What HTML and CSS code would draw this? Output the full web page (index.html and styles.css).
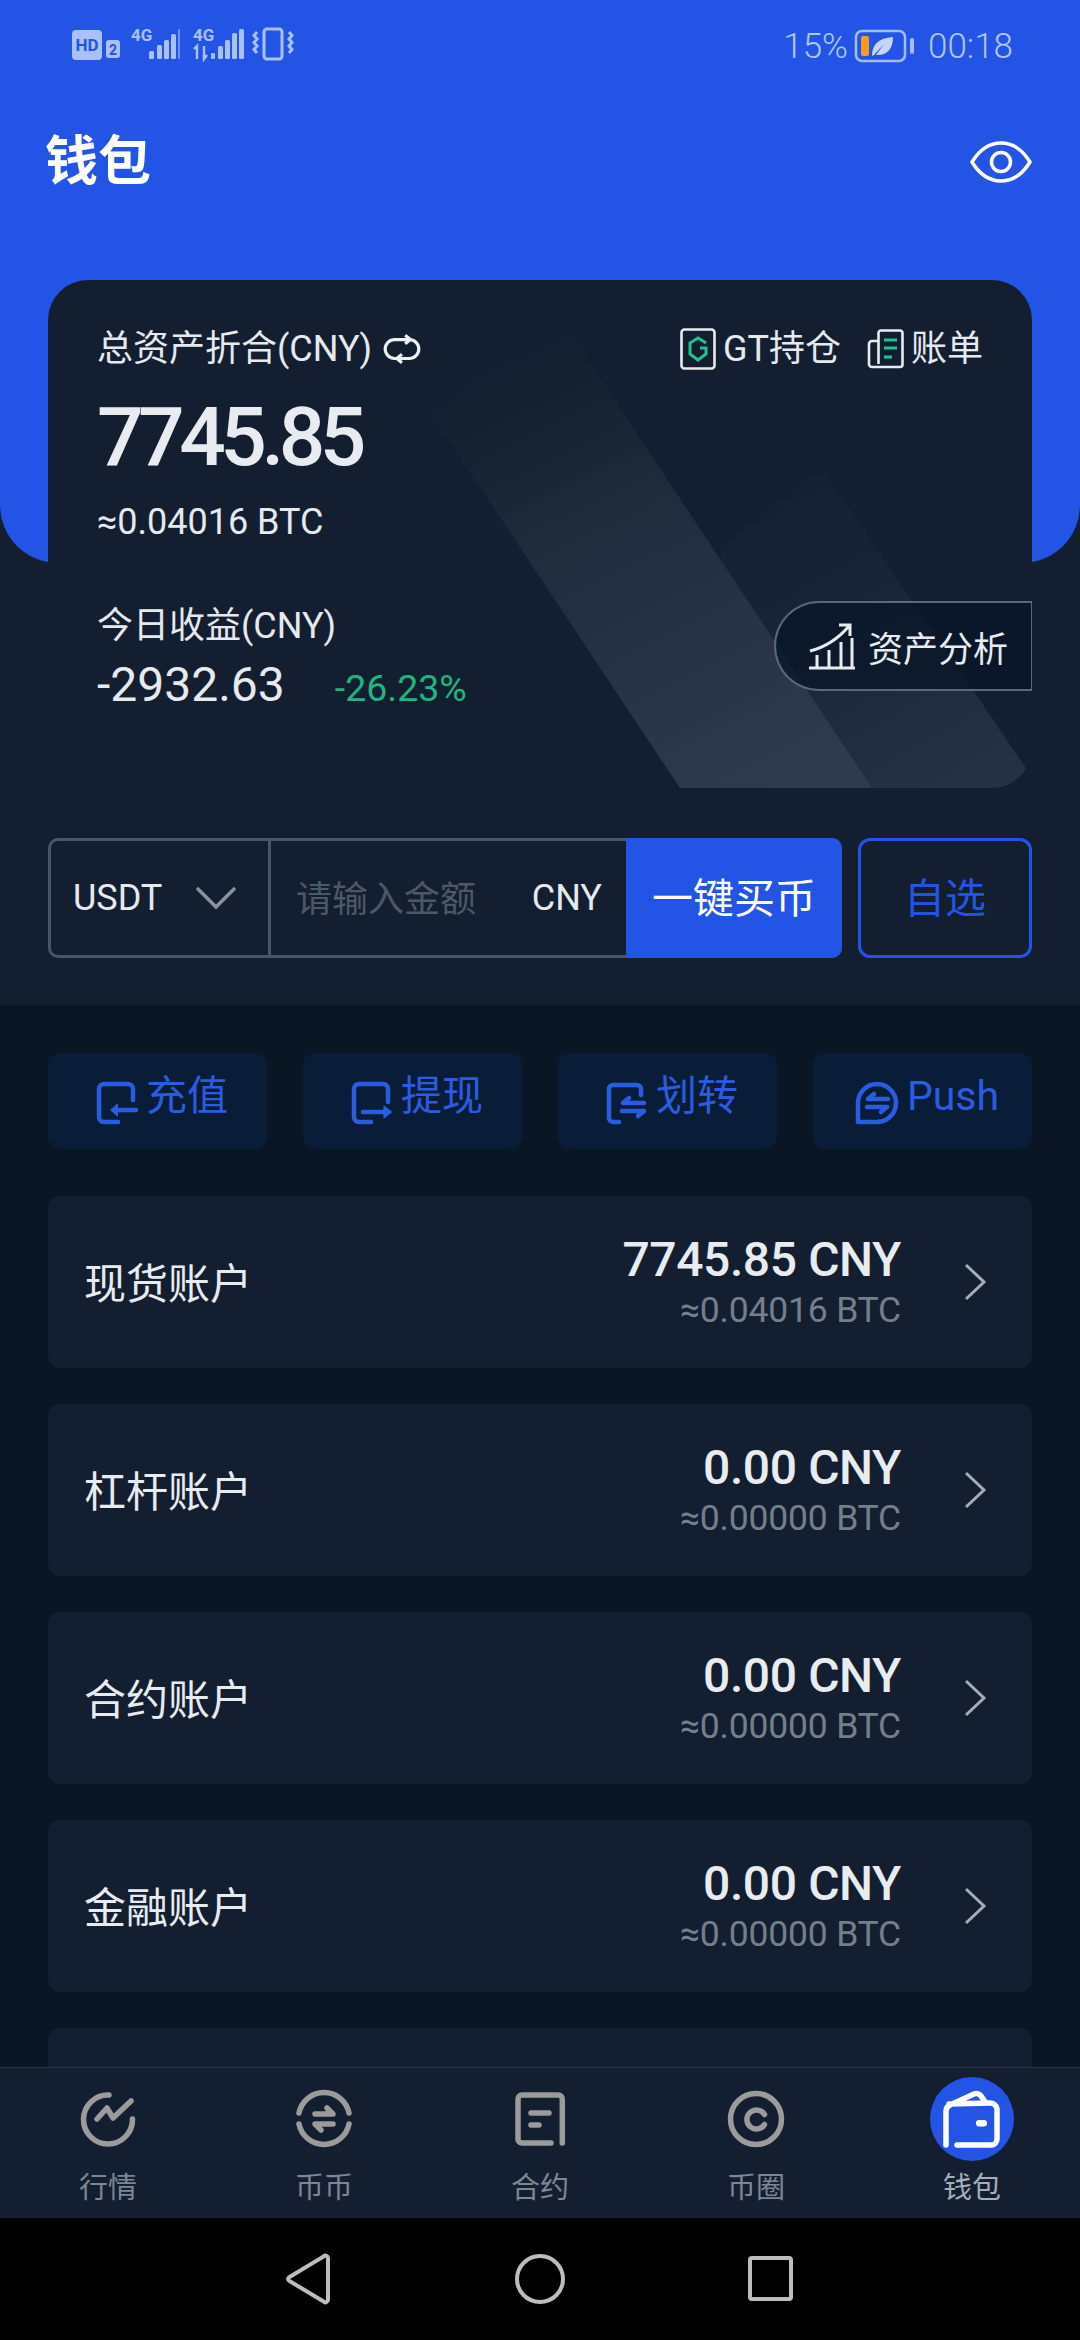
FILE: index.html
```html
<!DOCTYPE html>
<html lang="zh">
<head>
<meta charset="utf-8">
<title>钱包</title>
<link rel="stylesheet" href="styles.css">
</head>
<body>
<div class="app">
  <section class="top">
    <div class="hero"></div>
    <div class="status">
      <svg class="status-left" width="230" height="36" viewBox="0 0 230 36">
        <rect x="2" y="4" width="30" height="30" rx="4" fill="#a9c0f8"/>
        <text x="17" y="25" class="hd">HD</text>
        <rect x="36" y="14" width="14" height="18" rx="3" fill="#a9c0f8"/>
        <text x="43" y="29" class="hd2">2</text>
        <text x="61" y="15" class="g4">4G</text>
        <g fill="#a9c0f8"><rect x="79" y="25" width="5" height="8" rx="1.500"/><rect x="87" y="19" width="5" height="14" rx="1.500"/><rect x="94" y="14" width="5" height="19" rx="1.500"/><rect x="101" y="8" width="5" height="25" rx="1.500"/></g>
        <rect x="108" y="3" width="2" height="30" fill="#6f93ee"/>
        <text x="123" y="15" class="g4">4G</text>
        <path d="M127 33V20l-3 3M134 20v13l3-4" stroke="#a9c0f8" stroke-width="2.400" fill="none"/>
        <g fill="#a9c0f8"><rect x="141" y="27" width="4" height="6" rx="1"/><rect x="148" y="20" width="5" height="13" rx="1.500"/><rect x="155" y="14" width="5" height="19" rx="1.500"/><rect x="162" y="7" width="5" height="26" rx="1.500"/><rect x="169" y="3" width="5" height="30" rx="1.500"/></g>
        <rect x="194" y="3" width="18" height="30" rx="3" fill="none" stroke="#a9c0f8" stroke-width="3"/>
        <path d="M187 6l-3 3.500 3 3.500-3 3.500 3 3.500-3 3.500 3 3.500M219 6l3 3.500-3 3.500 3 3.500-3 3.500 3 3.500-3 3.500" fill="none" stroke="#a9c0f8" stroke-width="3"/>
      </svg>
      <div class="status-right">
        <span class="pct">15%</span>
        <svg width="62" height="34" viewBox="0 0 62 34">
          <rect x="2" y="2" width="49" height="30" rx="6" fill="none" stroke="#a3bcf6" stroke-width="2.5"/>
          <rect x="7" y="7" width="8" height="20" rx="2" fill="#f79a1f"/>
          <path d="M18 27c0-11 6-18 21-19 0 12-6 19-17 18l8-11-10 11z" fill="#c6d5fa"/>
          <rect x="56" y="9" width="4" height="16" rx="2" fill="#a3bcf6"/>
        </svg>
        <span class="time">00:18</span>
      </div>
    </div>
    <div class="title-row">
      <h1 class="title">钱包</h1>
      <svg width="62" height="44" viewBox="0 0 62 44"><path d="M2 22C10 9 20 3 31 3s21 6 29 19c-8 13-18 19-29 19S10 35 2 22z" fill="none" stroke="#fff" stroke-width="3.5"/><circle cx="31" cy="22" r="9.5" fill="none" stroke="#fff" stroke-width="3.5"/></svg>
    </div>

    <div class="card">
      <svg class="bands" width="984" height="508" viewBox="0 0 984 508">
        <defs>
          <linearGradient id="b1" gradientUnits="userSpaceOnUse" x1="500" y1="50" x2="720" y2="508"><stop offset="0" stop-color="#18232f" stop-opacity="0"/><stop offset=".35" stop-color="#1f2b3b"/><stop offset="1" stop-color="#2f3b4c"/></linearGradient>
          <linearGradient id="b2" gradientUnits="userSpaceOnUse" x1="730" y1="200" x2="900" y2="500"><stop offset="0" stop-color="#1c2839" stop-opacity=".1"/><stop offset=".3" stop-color="#172334"/><stop offset="1" stop-color="#253142"/></linearGradient>
        </defs>
        <path d="M672 267L775 190 984 497 960 508H700z" fill="url(#b2)"/>
        <path d="M384 135L504 26 824 508H632z" fill="url(#b1)"/>
      </svg>
      <div class="card-head">
        <div class="card-label">总资产折合(CNY)
          <svg class="swap" width="42" height="32" viewBox="0 0 40 30"><path d="M14 6H13a9 9 0 0 0 0 18h13M26 6h1a9 9 0 0 1 0 18h-1M14 6h14M23 2l5 4-5 4M20 20l-5 4 5 4" fill="none" stroke="#eef0f3" stroke-width="3"/></svg>
        </div>
        <div class="card-links">
          <span class="link">
            <svg width="36" height="42" viewBox="0 0 36 42"><rect x="1.5" y="1.5" width="33" height="39" rx="3" fill="none" stroke="#e8ebef" stroke-width="2.6"/><path d="M26 15l-8-5-8 5v11l8 6 8-6v-6h-6" fill="none" stroke="#1fc38b" stroke-width="3"/></svg>
            GT持仓
          </span>
          <span class="link">
            <svg width="37" height="40" viewBox="0 0 37 40"><path d="M12 38H5a3 3 0 0 1-3-3V15a3 3 0 0 1 3-3h7M12 38h21a2.500 2.500 0 0 0 2.500-2.500V4A2.500 2.500 0 0 0 33 1.500H14A2.500 2.500 0 0 0 11.500 4v31" fill="none" stroke="#e8ebef" stroke-width="2.600"/><path d="M17 11h13M17 19h13M17 28h8" stroke="#1fc38b" stroke-width="3"/></svg>
            账单
          </span>
        </div>
      </div>
      <div class="amount">7745.85</div>
      <div class="btc">≈0.04016 BTC</div>
      <div class="today">
        <div class="today-info">
          <div class="today-label">今日收益(CNY)</div>
          <div class="today-values"><span class="today-num">-2932.63</span><span class="today-pct">-26.23%</span></div>
        </div>
        <div class="analysis">
          <svg width="48" height="48" viewBox="0 0 48 48"><path d="M1 46h46M9 46V33M21 46V28M33 46V20M44 46V16" stroke="#e8ebef" stroke-width="3" fill="none"/><path d="M2 29C18 25 30 17 41 4M31 3h11v11" stroke="#e8ebef" stroke-width="3" fill="none"/></svg>
          资产分析
        </div>
      </div>
    </div>

    <div class="buy">
      <div class="buy-box">
        <div class="coin">USDT
          <svg width="44" height="26" viewBox="0 0 44 26"><path d="M3 3l19 19L41 3" fill="none" stroke="#8a929c" stroke-width="3.500"/></svg>
        </div>
        <div class="input"><span class="placeholder">请输入金额</span><span class="unit">CNY</span></div>
        <div class="buy-btn"><span class="btn-text">一键买币</span></div>
      </div>
      <div class="fav"><span class="btn-text">自选</span></div>
    </div>
  </section>

  <section class="list">
    <div class="actions">
      <div class="action">
        <svg class="ico" width="42" height="42" viewBox="0 0 42 42"><path d="M22 40H8a5 5 0 0 1-5-5V7a5 5 0 0 1 5-5h24a5 5 0 0 1 5 5v11M40 28H20"/><path class="ico-fill" d="M14 28l8-7v14z"/></svg>
        <span class="action-text">充值</span>
      </div>
      <div class="action">
        <svg class="ico" width="42" height="42" viewBox="0 0 42 42"><path d="M20 40H8a5 5 0 0 1-5-5V7a5 5 0 0 1 5-5h24a5 5 0 0 1 5 5v13M12 30h21"/><path class="ico-fill" d="M41.500 30l-9-7v14z"/></svg>
        <span class="action-text">提现</span>
      </div>
      <div class="action">
        <svg class="ico" width="42" height="42" viewBox="0 0 42 42"><path d="M13 40H7a4 4 0 0 1-4-4V7a4 4 0 0 1 4-4h24a4 4 0 0 1 4 4v6M38 21H17l6-5M16 29h22l-6 5"/></svg>
        <span class="action-text">划转</span>
      </div>
      <div class="action">
        <svg class="ico" width="44" height="44" viewBox="0 0 44 44"><path d="M3 41V22a19 19 0 1 1 19 19zM33 18H13l6-5M12 26h20l-6 5"/></svg>
        <span class="action-text">Push</span>
      </div>
    </div>
    <div class="accounts">
      <div class="account">
        <span class="acc-name">现货账户</span>
        <div class="acc-values"><div class="acc-main">7745.85 CNY</div><div class="acc-sub">≈0.04016 BTC</div></div>
        <svg class="chev" width="24" height="38" viewBox="0 0 24 38"><path d="M3 2l18 17L3 36" fill="none" stroke="#a6adb6" stroke-width="3"/></svg>
      </div>
      <div class="account">
        <span class="acc-name">杠杆账户</span>
        <div class="acc-values"><div class="acc-main">0.00 CNY</div><div class="acc-sub">≈0.00000 BTC</div></div>
        <svg class="chev" width="24" height="38" viewBox="0 0 24 38"><path d="M3 2l18 17L3 36" fill="none" stroke="#a6adb6" stroke-width="3"/></svg>
      </div>
      <div class="account">
        <span class="acc-name">合约账户</span>
        <div class="acc-values"><div class="acc-main">0.00 CNY</div><div class="acc-sub">≈0.00000 BTC</div></div>
        <svg class="chev" width="24" height="38" viewBox="0 0 24 38"><path d="M3 2l18 17L3 36" fill="none" stroke="#a6adb6" stroke-width="3"/></svg>
      </div>
      <div class="account">
        <span class="acc-name">金融账户</span>
        <div class="acc-values"><div class="acc-main">0.00 CNY</div><div class="acc-sub">≈0.00000 BTC</div></div>
        <svg class="chev" width="24" height="38" viewBox="0 0 24 38"><path d="M3 2l18 17L3 36" fill="none" stroke="#a6adb6" stroke-width="3"/></svg>
      </div>
      <div class="account"></div>
    </div>
  </section>

  <nav class="tabbar">
    <div class="tab">
      <svg class="tab-ico" width="84" height="84" viewBox="0 0 84 84"><path d="M43 18A24.500 24.500 0 1 0 66.500 42"/><path d="M31 42l10-11 6 10 18-17"/></svg>
      <span class="tab-label">行情</span>
    </div>
    <div class="tab">
      <svg class="tab-ico" width="84" height="84" viewBox="0 0 84 84"><path d="M17 36A25.500 25.500 0 0 1 67 36M17 47A25.500 25.500 0 0 0 67 47"/><path d="M33 37H51L45 31M51 47H33L39 53"/></svg>
      <span class="tab-label">币币</span>
    </div>
    <div class="tab">
      <svg class="tab-ico" width="84" height="84" viewBox="0 0 84 84"><path d="M64.300 66V22a4 4 0 0 0-4-4H24a4 4 0 0 0-4 4v40a4 4 0 0 0 4 4h29"/><path d="M33 36H51M33 48H41"/></svg>
      <span class="tab-label">合约</span>
    </div>
    <div class="tab">
      <svg class="tab-ico" width="84" height="84" viewBox="0 0 84 84"><circle cx="42" cy="42" r="25.500"/><path d="M50.500 37.500A9.500 9.500 0 1 0 50.500 47.500"/></svg>
      <span class="tab-label">币圈</span>
    </div>
    <div class="tab tab-active">
      <svg width="84" height="84" viewBox="0 0 84 84"><circle cx="42" cy="42" r="42" fill="#2354e6"/><path d="M16 68V34a7 7 0 0 1 4-6L44 17a6 6 0 0 1 7 2l5 7M19 27L60 26a7 7 0 0 1 7 6V62a6 6 0 0 1-6 6H27" fill="none" stroke="#fff" stroke-width="5.500" stroke-linecap="round" stroke-linejoin="round"/><rect x="46" y="43" width="11" height="6.500" rx="3" fill="#fff"/></svg>
      <span class="tab-label">钱包</span>
    </div>
  </nav>

  <nav class="sysnav">
    <svg width="60" height="60" viewBox="0 0 60 60"><path d="M49 9v42a2.500 2.500 0 0 1-4.300 1.600L10 31.700a2.500 2.500 0 0 1 0-3.400L44.700 7.400A2.500 2.500 0 0 1 49 9z" fill="none" stroke="#bdbdbd" stroke-width="4"/></svg>
    <svg width="60" height="60" viewBox="0 0 60 60"><circle cx="30" cy="30" r="23" fill="none" stroke="#bdbdbd" stroke-width="4"/></svg>
    <svg width="60" height="60" viewBox="0 0 60 60"><rect x="9" y="9" width="41" height="41" rx="2" fill="none" stroke="#bdbdbd" stroke-width="4"/></svg>
  </nav>
</div>
</body>
</html>
```

FILE: styles.css
```css
* { box-sizing: border-box; }
html, body { margin: 0; padding: 0; background: #000; }
body { font-family: Roboto, "Noto Sans CJK SC", "Noto Sans", sans-serif; color: #e6e9ee; }
.app { width: 1080px; height: 2340px; display: flex; flex-direction: column; overflow: hidden; position: relative; }

.top { position: relative; height: 1005px; background: #131f30; flex: none; }
.hero { position: absolute; left: 0; top: 0; width: 1080px; height: 563px; background: #2354e6; border-radius: 0 0 58px 58px; }

.status { position: relative; height: 92px; padding: 26px 67px 0 70px; display: flex; justify-content: space-between; align-items: flex-start; }
.hd { font: 700 17px Roboto, sans-serif; fill: #2354e6; text-anchor: middle; }
.hd2 { font: 700 14px Roboto, sans-serif; fill: #2354e6; text-anchor: middle; }
.g4 { font: 700 17px Roboto, sans-serif; fill: #a9c0f8; }
.status-right { display: flex; align-items: center; height: 40px; color: #b2c6fa; font-size: 35px; font-weight: 300; }
.pct { margin-right: 6px; }
.time { margin-left: 12px; }

.title-row { position: relative; height: 136px; padding: 4px 48px 0 45px; display: flex; justify-content: space-between; align-items: center; }
.title { margin: 0; font-size: 53px; line-height: 60px; font-weight: 700; color: #fff; }

.card { position: relative; margin: 52px 48px 0; height: 508px; background: #131f30; border-radius: 40px; padding-left: 49px; overflow: hidden; }
.bands { position: absolute; left: 0; top: 0; }
.card-head, .amount, .btc, .today { position: relative; }
.card-head { display: flex; justify-content: space-between; align-items: center; padding: 44px 48px 0 0; }
.card-label { display: flex; align-items: center; font-size: 36px; line-height: 50px; }
.swap { margin-left: 9px; }
.card-links { display: flex; gap: 26px; margin-right: 1px; }
.link { display: flex; align-items: center; gap: 7px; font-size: 36px; line-height: 50px; }
.amount { margin-top: 18px; font-size: 82px; line-height: 90px; letter-spacing: -5.500px; font-weight: 500; color: #e8ebef; }
.btc { margin-top: 18px; font-size: 36px; line-height: 44px; }
.today { margin-top: 57px; display: flex; justify-content: space-between; align-items: center; }
.today-values { display: flex; align-items: baseline; margin-top: 4px; }
.today-label { font-size: 36px; line-height: 50px; }
.today-num { font-size: 48px; line-height: 60px; }
.today-pct { margin-left: 50px; font-size: 37.500px; color: #1fb57e; }
.analysis { width: 258px; height: 90px; margin-top: -24px; display: flex; align-items: center; gap: 12px; padding-left: 32px; font-size: 35px; background: rgba(8, 22, 40, .75); border: 2px solid #5c6878; border-right-width: 1.500px; border-radius: 45px 0 0 45px; color: #e8ebef; }

.buy { position: relative; display: flex; gap: 16px; margin: 50px 48px 0; height: 120px; }
.buy-box { flex: 1; display: flex; border: 3px solid #4a5565; border-right: 0; border-radius: 10px; }
.coin { width: 220px; display: flex; align-items: center; justify-content: space-between; padding: 0 30px 0 22px; border-right: 3px solid #4a5565; font-size: 36px; }
.input { flex: 1; display: flex; align-items: center; justify-content: space-between; padding: 0 24px 0 25px; font-size: 36px; }
.placeholder { color: #4d5867; padding-bottom: 4px; }
.unit { color: #e6e9ee; }
.buy-btn { width: 216px; margin: -3px 0; display: flex; align-items: center; justify-content: center; background: #2354e6; border-radius: 0 10px 10px 0; color: #fff; font-size: 41px; }
.fav { width: 174px; display: flex; align-items: center; justify-content: center; border: 3px solid #2354e6; border-radius: 12px; color: #2354e6; font-size: 41px; }
.btn-text { padding-bottom: 6px; }

.list { flex: 1; min-height: 0; overflow: hidden; background: #0a1624; padding: 48px 48px 0; }
.actions { display: grid; grid-template-columns: repeat(4, 219px); justify-content: space-between; }
.action { height: 96px; padding-left: 9px; display: flex; align-items: center; justify-content: center; gap: 8px; background: #0a1d38; border-radius: 12px; }
.ico { flex: none; margin-top: 4px; overflow: visible; fill: none; stroke: #2a5ce0; stroke-width: 4.500; stroke-linecap: round; stroke-linejoin: round; }
.ico .ico-fill { fill: #2a5ce0; stroke: none; }
.action-text { padding-bottom: 10px; color: #2a5ce0; font-size: 41px; line-height: 50px; }
.accounts { display: flex; flex-direction: column; gap: 36px; margin-top: 47px; }
.account { flex: none; height: 172px; display: flex; align-items: center; padding: 0 45px 0 36px; background: #131f30; border-radius: 12px; }
.acc-name { font-size: 42px; color: #e8ebef; padding-bottom: 4px; }
.acc-values { margin-left: auto; text-align: right; }
.acc-main { font-size: 48px; line-height: 56px; font-weight: 500; letter-spacing: -.4px; color: #e8ebef; }
.acc-sub { font-size: 35.500px; line-height: 44px; color: #747f8d; letter-spacing: -.2px; }
.chev { margin-left: 62px; }

.tabbar { flex: none; height: 151px; display: grid; grid-template-columns: repeat(5, 1fr); background: #131f30; border-top: 1.500px solid #2a3646; padding-top: 9px; }
.tab { display: flex; flex-direction: column; align-items: center; }
.tab-ico { fill: none; stroke: #9b9b9b; stroke-width: 5.500; stroke-linecap: round; stroke-linejoin: round; }
.tab-label { margin-top: 7px; font-size: 29px; line-height: 40px; color: #7c8694; }
.tab-active .tab-label { color: #a5afbc; }

.sysnav { flex: none; height: 122px; background: #000; display: flex; align-items: center; justify-content: center; gap: 171px; }
```
